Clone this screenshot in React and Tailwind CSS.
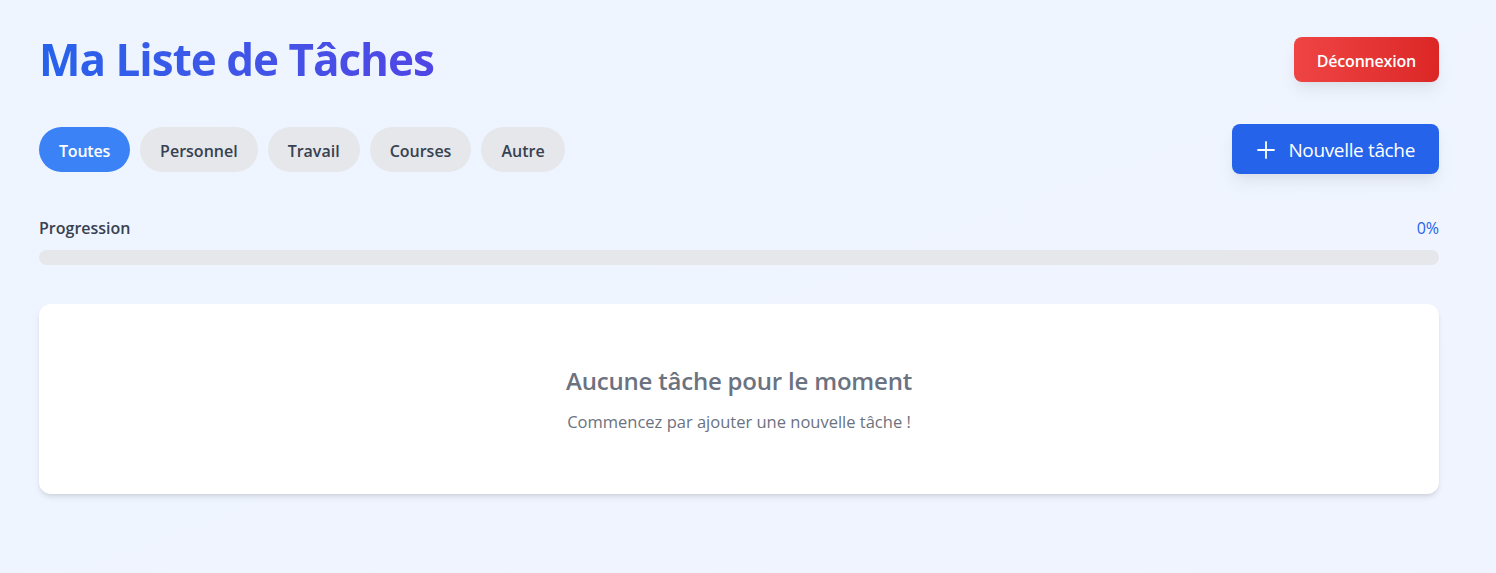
import React from "react";

export default function App() {
  const cats = ["Toutes", "Personnel", "Travail", "Courses", "Autre"];
  return (
    <div
      className="min-h-[573px] w-full bg-gradient-to-br from-[#eef5ff] to-[#f0f4ff]"
      style={{ fontFamily: '"Open Sans", "Noto Sans", sans-serif' }}
    >
      <div className="w-[1400px] ml-[39px] pt-[37px]">
        <div className="flex items-center justify-between h-[45px]">
          <h1 className="text-[44px] font-bold leading-none bg-gradient-to-r from-[#2563eb] to-[#4f46e5] bg-clip-text text-transparent tracking-[-1px] pb-[2px]">
            Ma Liste de Tâches
          </h1>
          <button className="h-[45px] px-[23px] rounded-lg bg-gradient-to-r from-[#ef4444] to-[#dc2626] text-white font-semibold text-[16px] shadow-lg shadow-gray-300/60 tracking-[-0.2px] pt-[2px]">
            Déconnexion
          </button>
        </div>

        <div className="flex items-center justify-between mt-[42px]">
          <div className="flex gap-[10px]">
            {cats.map((c, i) => (
              <button
                key={c}
                className={
                  i === 0
                    ? "h-[45px] px-5 pt-[3px] rounded-full bg-[#3b82f6] text-white font-semibold text-[16px] tracking-[-0.2px]"
                    : "h-[45px] px-5 pt-[3px] rounded-full bg-[#e5e7eb] text-[#374151] font-semibold text-[16px] tracking-[0px]"
                }
              >
                {c}
              </button>
            ))}
          </div>
          <button className="h-[50px] px-6 pt-[2px] rounded-lg bg-[#2563eb] text-white text-[19px] font-medium flex items-center gap-3 shadow-lg shadow-gray-300/60 tracking-[-0.35px]">
            <svg width="20" height="20" viewBox="0 0 20 20" fill="none" stroke="currentColor" strokeWidth="1.8" strokeLinecap="round">
              <path d="M10 2v16M2 10h16" />
            </svg>
            Nouvelle tâche
          </button>
        </div>

        <div className="mt-[42px]">
          <div className="flex justify-between items-center text-[16px] font-semibold">
            <span className="text-[#374151]">Progression</span>
            <span className="text-[#2563eb] font-medium">0%</span>
          </div>
          <div className="mt-[10px] h-[15px] rounded-full bg-[#e5e7eb]" />
        </div>

        <div className="mt-[39px] h-[190px] rounded-xl bg-white shadow-md flex flex-col items-center justify-center">
          <div className="text-[24px] font-semibold text-[#6b7280] tracking-[-0.2px]">
            Aucune tâche pour le moment
          </div>
          <div className="text-[16.5px] text-[#6b7280] mt-[11px]">
            Commencez par ajouter une nouvelle tâche !
          </div>
        </div>
      </div>
    </div>
  );
}
